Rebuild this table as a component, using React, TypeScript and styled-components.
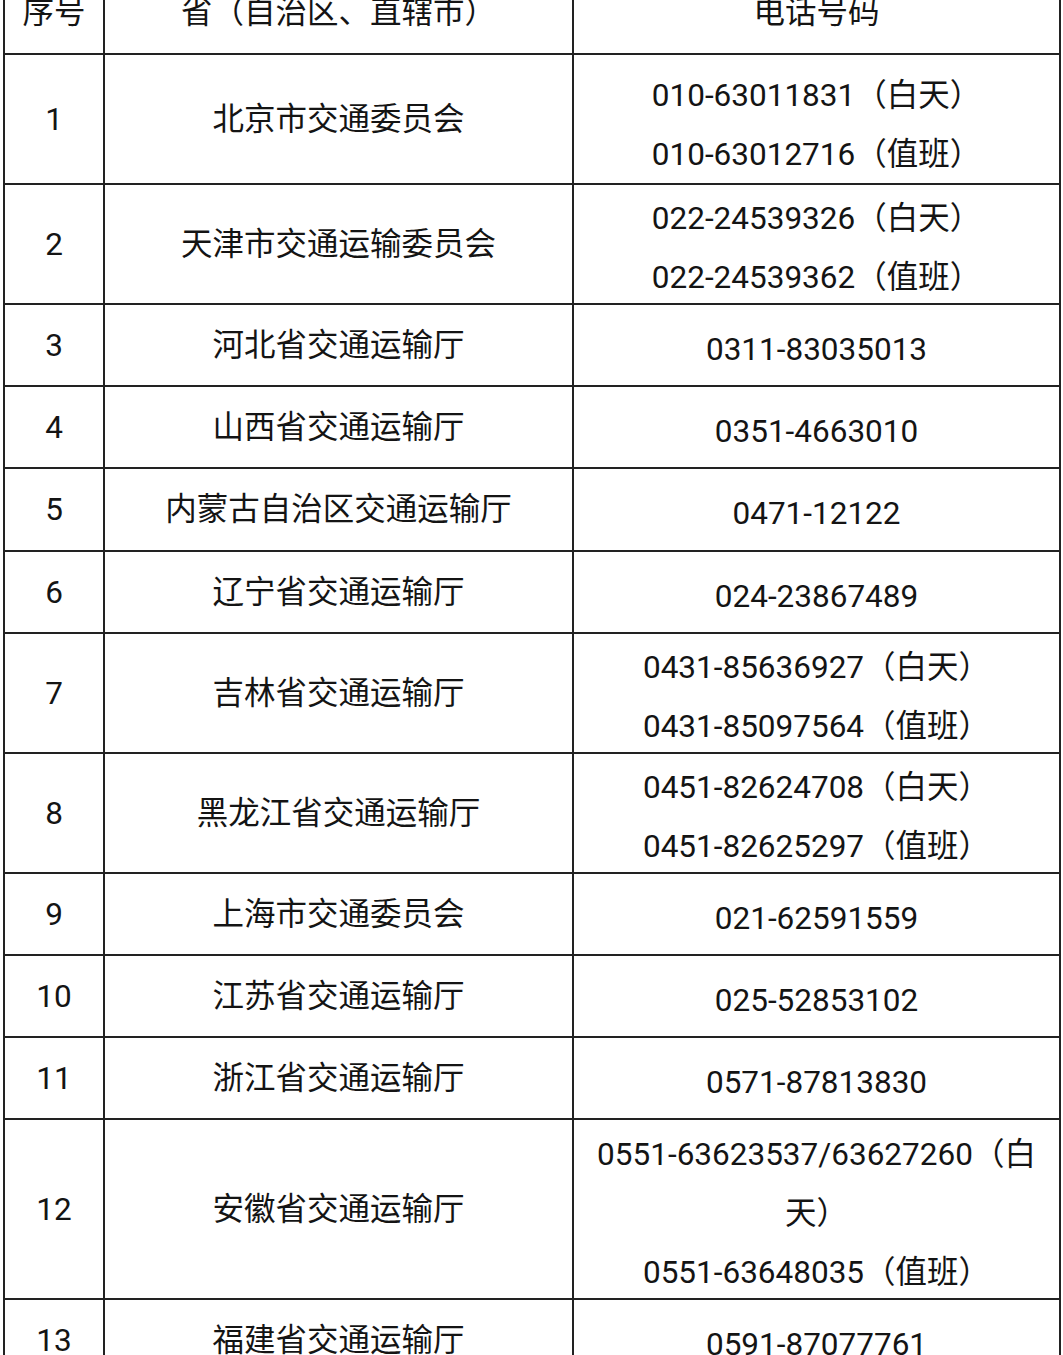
import React from "react";
import styled, { createGlobalStyle } from "styled-components";

const Global = createGlobalStyle`
  html, body { margin: 0; padding: 0; background: #fff; }
  body { font-family: Roboto, "Noto Sans CJK SC", sans-serif; color: #141414; overflow: hidden; }
`;

const Page = styled.div`
  padding-left: 3px;
  margin-top: -30px;
  width: 1063px;
  height: 1400px;
  box-sizing: border-box;
`;

const Table = styled.table`
  border-collapse: collapse;
  table-layout: fixed;
  width: 1056px;
  font-size: 31.5px;
  line-height: 59px;
`;

const Row = styled.tr<{ $h: number }>`
  height: ${(p) => p.$h}px;
`;

const Cell = styled.td<{ $narrow?: boolean; $pt?: number }>`
  border: 2px solid #222;
  text-align: center;
  vertical-align: middle;
  padding: ${(p) => `${p.$pt ?? 0}px ${p.$narrow ? 0 : 18}px 0`};
  white-space: ${(p) => (p.$narrow ? "nowrap" : "normal")};
  box-sizing: border-box;
`;

const HeadCell = styled(Cell).attrs({ as: "th" })`
  font-weight: 400;
  white-space: nowrap;
`;

const PhoneStack = styled.div`
  margin: 4px 0 -4px;
`;

const Line = styled.div``;

type R = { n: string; org: string; phones: string[]; h: number; pt?: number };

const rows: R[] = [
  { n: "1", org: "北京市交通委员会", phones: ["010-63011831（白天）", "010-63012716（值班）"], h: 130, pt: 3 },
  { n: "2", org: "天津市交通运输委员会", phones: ["022-24539326（白天）", "022-24539362（值班）"], h: 120 },
  { n: "3", org: "河北省交通运输厅", phones: ["0311-83035013"], h: 82 },
  { n: "4", org: "山西省交通运输厅", phones: ["0351-4663010"], h: 82 },
  { n: "5", org: "内蒙古自治区交通运输厅", phones: ["0471-12122"], h: 83 },
  { n: "6", org: "辽宁省交通运输厅", phones: ["024-23867489"], h: 82 },
  { n: "7", org: "吉林省交通运输厅", phones: ["0431-85636927（白天）", "0431-85097564（值班）"], h: 120 },
  { n: "8", org: "黑龙江省交通运输厅", phones: ["0451-82624708（白天）", "0451-82625297（值班）"], h: 120 },
  { n: "9", org: "上海市交通委员会", phones: ["021-62591559"], h: 82 },
  { n: "10", org: "江苏省交通运输厅", phones: ["025-52853102"], h: 82 },
  { n: "11", org: "浙江省交通运输厅", phones: ["0571-87813830"], h: 82 },
  { n: "12", org: "安徽省交通运输厅", phones: ["0551-63623537/63627260（白天）", "0551-63648035（值班）"], h: 180 },
  { n: "13", org: "福建省交通运输厅", phones: ["0591-87077761"], h: 82 },
];

export default function App() {
  return (
    <Page>
      <Global />
      <Table>
        <colgroup>
          <col style={{ width: 100 }} />
          <col style={{ width: 469 }} />
          <col style={{ width: 487 }} />
        </colgroup>
        <thead>
          <Row $h={83}>
            <HeadCell $narrow>序号</HeadCell>
            <HeadCell>省（自治区、直辖市）</HeadCell>
            <HeadCell>电话号码</HeadCell>
          </Row>
        </thead>
        <tbody>
          {rows.map((r) => (
            <Row key={r.n} $h={r.h}>
              <Cell $narrow>{r.n}</Cell>
              <Cell>{r.org}</Cell>
              <Cell $pt={r.pt}>
                <PhoneStack>
                  {r.phones.map((p) => (
                    <Line key={p}>{p}</Line>
                  ))}
                </PhoneStack>
              </Cell>
            </Row>
          ))}
        </tbody>
      </Table>
    </Page>
  );
}
